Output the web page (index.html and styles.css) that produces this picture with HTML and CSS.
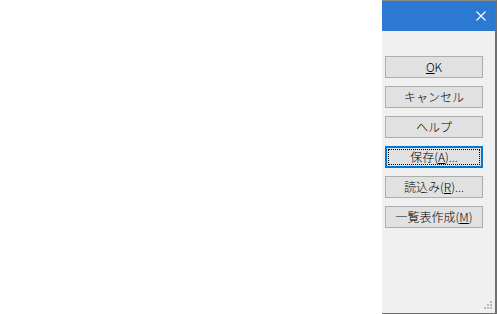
FILE: index.html
```html
<!DOCTYPE html>
<html lang="ja">
<head>
  <meta charset="UTF-8" />
  <title>ダイアログ</title>
  <link rel="stylesheet" href="styles.css">
</head>
<body>
  <div class="blank"></div>

  <div class="dialog">
    <div class="title-bar">
      <span class="close">
        <svg width="10" height="10" viewBox="0 0 10 10">
          <path d="M0.5 0.5 L9.5 9.5 M9.5 0.5 L0.5 9.5" stroke="#ffffff" stroke-width="1.1" fill="none"/>
        </svg>
      </span>
    </div>

    <div class="buttons">
      <button><u>O</u>K</button>
      <button>キャンセル</button>
      <button>ヘルプ</button>
      <button class="focused"><span class="focus-ring">保存(<u>A</u>)...</span></button>
      <button>読込み(<u>R</u>)...</button>
      <button>一覧表作成(<u>M</u>)</button>
    </div>

    <!-- サイズ変更グリップ -->
    <svg class="grip" width="12" height="12" viewBox="0 0 12 12">
      <rect x="8" y="0" width="2" height="2" fill="#bcbcbc"/>
      <rect x="5" y="3" width="2" height="2" fill="#bcbcbc"/>
      <rect x="8" y="3" width="2" height="2" fill="#bcbcbc"/>
      <rect x="2" y="6" width="2" height="2" fill="#bcbcbc"/>
      <rect x="5" y="6" width="2" height="2" fill="#bcbcbc"/>
      <rect x="8" y="6" width="2" height="2" fill="#bcbcbc"/>
    </svg>
  </div>
</body>
</html>
```

FILE: styles.css
```css
* {
  box-sizing: border-box;
}
body {
  margin: 0;
  padding: 0;
  width: 497px;
  height: 314px;
  display: flex;
  background-color: #ffffff;
  font-family: "Noto Sans CJK JP", "Noto Sans", sans-serif;
  overflow: hidden;
}
.blank {
  flex: 1;
}
.dialog {
  position: relative;
  width: 115px;
  height: 314px;
  background-color: #f0f0f0;
  border-top: 1px solid #8a8a8a;
  border-right: 2px solid #6f6f6f;
  border-bottom: 1px solid #6f6f6f;
  display: flex;
  flex-direction: column;
}
.title-bar {
  height: 30px;
  background-color: #2b79d0;
  display: flex;
  justify-content: flex-end;
  align-items: center;
  padding-right: 9px;
}
.close {
  display: flex;
  margin-top: -1px;
}
.buttons {
  display: flex;
  flex-direction: column;
  gap: 8px;
  padding: 25px 0 0 3px;
}
button {
  width: 98px;
  height: 22px;
  padding: 0;
  background-color: #e1e1e1;
  border: 1px solid #adadad;
  border-radius: 0;
  font-family: "Noto Sans CJK JP", "Noto Sans", sans-serif;
  font-size: 12px;
  font-weight: 300;
  line-height: 18px;
  color: #000000;
  display: flex;
  justify-content: center;
  align-items: center;
}
button u {
  text-decoration-thickness: 1px;
  text-underline-offset: 1px;
}
button.focused {
  border: 2px solid #0078d7;
  padding: 1px;
}
.focus-ring {
  width: 100%;
  height: 100%;
  border: 1px dotted #000000;
  display: flex;
  justify-content: center;
  align-items: center;
}
.grip {
  position: absolute;
  right: 1px;
  bottom: 0;
}
```
